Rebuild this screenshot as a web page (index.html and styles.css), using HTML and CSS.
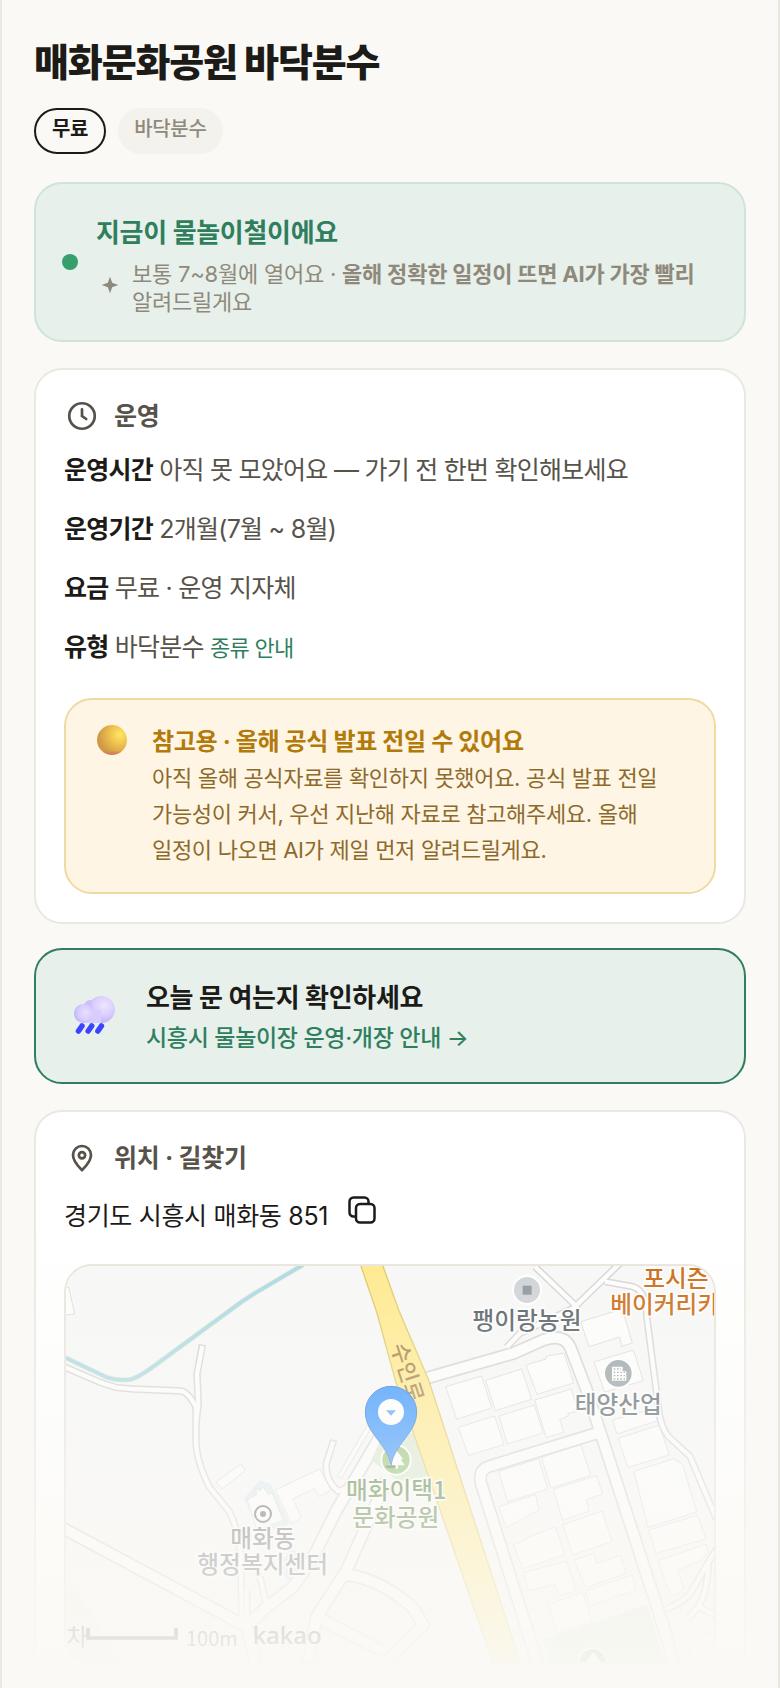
FILE: index.html
```html
<!DOCTYPE html>
<html lang="ko">
  <head>
    <meta charset="UTF-8" />
    <meta name="viewport" content="width=device-width, initial-scale=1.0" />
    <title>매화문화공원 바닥분수</title>
    <link rel="stylesheet" href="styles.css">
  </head>
  <body>
    <main class="page">
      <header class="page-header">
        <h1 class="page-title">매화문화공원 바닥분수</h1>
        <div class="badges">
          <span class="badge badge-free">무료</span>
          <span class="badge">바닥분수</span>
        </div>
      </header>

      <section class="card season-card">
        <span class="season-dot"></span>
        <div class="season-body">
          <h2 class="season-title">지금이 물놀이철이에요</h2>
          <div class="season-note">
            <svg class="spark" viewBox="0 0 24 24" aria-hidden="true"><path d="M12 2l2.600 7.400L22 12l-7.400 2.600L12 22l-2.600-7.400L2 12l7.400-2.600z" /></svg>
            <p>보통 7~8월에 열어요 · <b>올해 정확한 일정이 뜨면 AI가 가장 빨리</b> 알려드릴게요</p>
          </div>
        </div>
      </section>

      <section class="card info-card">
        <h2 class="card-head">
          <svg class="head-icon" viewBox="0 0 24 24" aria-hidden="true"><circle cx="12" cy="12" r="8.500" /><path d="M12 7.500V12l2.800 2" /></svg>
          운영
        </h2>
        <div class="info-rows">
          <p><b>운영시간</b> 아직 못 모았어요 — 가기 전 한번 확인해보세요</p>
          <p><b>운영기간</b> 2개월(7월 ~ 8월)</p>
          <p><b>요금</b> 무료 · 운영 지자체</p>
          <p><b>유형</b> 바닥분수 <a class="type-link" href="#">종류 안내</a></p>
        </div>
        <div class="caution">
          <svg class="coin" viewBox="0 0 32 32" aria-hidden="true">
            <defs>
              <radialGradient id="coinFill" cx="0.76" cy="0.32" r="0.7">
                <stop offset="0" stop-color="#ffe860" />
                <stop offset="0.5" stop-color="#eec04e" />
                <stop offset="1" stop-color="#d09a45" />
              </radialGradient>
              <linearGradient id="coinShade" x1="0" y1="0" x2="0" y2="1">
                <stop offset="0.85" stop-color="#d0706a" stop-opacity="0" />
                <stop offset="1" stop-color="#d0706a" stop-opacity="0.9" />
              </linearGradient>
            </defs>
            <circle cx="16" cy="16" r="15" fill="url(#coinFill)" />
            <circle cx="16" cy="16" r="15" fill="url(#coinShade)" />
          </svg>
          <div>
            <h3 class="caution-title">참고용 · 올해 공식 발표 전일 수 있어요</h3>
            <p class="caution-text">아직 올해 공식자료를 확인하지 못했어요. 공식 발표 전일 가능성이 커서, 우선 지난해 자료로 참고해주세요. 올해 일정이 나오면 AI가 제일 먼저 알려드릴게요.</p>
          </div>
        </div>
      </section>

      <a class="card notice-card" href="#">
        <svg class="rain" viewBox="0 3 44 44" aria-hidden="true">
          <defs>
            <radialGradient id="cloudBack" cx="0.6" cy="0.35" r="0.65">
              <stop offset="0" stop-color="#ece6ff" />
              <stop offset="0.6" stop-color="#dacdfd" />
              <stop offset="1" stop-color="#bdb2fb" />
            </radialGradient>
            <radialGradient id="cloudFront" cx="0.6" cy="0.45" r="0.6">
              <stop offset="0" stop-color="#e8defe" />
              <stop offset="0.65" stop-color="#d8cdfd" />
              <stop offset="1" stop-color="#bcb5fb" />
            </radialGradient>
          </defs>
          <circle cx="18" cy="13" r="6" fill="#cdc0fa" />
          <circle cx="29.5" cy="16.5" r="13.5" fill="url(#cloudBack)" />
          <rect x="11" y="17" width="18" height="13" fill="#d8ccfd" />
          <circle cx="11.500" cy="20.500" r="9.500" fill="url(#cloudFront)" />
          <path d="M10 33l-3.500 5M19.700 33l-3.500 5M29.400 33l-3.500 5" stroke="#3b45ff" stroke-width="5.500" stroke-linecap="round" />
        </svg>
        <span class="notice-body">
          <strong class="notice-title">오늘 문 여는지 확인하세요</strong>
          <span class="notice-sub">시흥시 물놀이장 운영·개장 안내 →</span>
        </span>
      </a>

      <section class="card place-card">
        <h2 class="card-head">
          <svg class="head-icon" viewBox="0 0 24 24" aria-hidden="true"><path d="M12 20C10 18 6 14.500 6 10a6 6 0 0 1 12 0c0 4.500-4 8-6 10z" /><circle cx="12" cy="10.200" r="2.100" /></svg>
          위치 · 길찾기
        </h2>
        <div class="address">
          <span>경기도 시흥시 매화동 851</span>
          <button class="copy-button" type="button" aria-label="주소 복사">
            <svg viewBox="0 0 28 28" aria-hidden="true"><rect x="8" y="8" width="18.500" height="18.500" rx="4" /><path d="M8 20.500H5.500a4 4 0 0 1-4-4v-11a4 4 0 0 1 4-4h11a4 4 0 0 1 4 4V8" /></svg>
          </button>
        </div>

        <div class="map">
          <svg class="map-canvas" viewBox="48 48 1944 1188" preserveAspectRatio="xMidYMin slice" role="img" aria-label="지도">
            <!-- plots, parks -->
            <g class="map-plot">
              <path d="M30 112h26l18 79-44 8z" />
              <path d="M498 696l74-54 14 20-70 55z" />
              <path d="M675 720l134-63 35 63-37 20-14-24-64 30 26 58-30 17z" />
              <path d="M862 680l90-155 12 8-90 152z" />
              <path d="M1187 410l108-32 30 96-105 34zM1307 391l108-34 30 91-109 34zM1428 345l60-18v-8l54-10 29 90-110 34zM1225 532l109-34 28 86-107 32zM1347 498l106-33 26 84-107 33zM1454 450l110-33 20 66-30 8 1 6-26 12 12 38-52 16z" />
              <path d="M1346 664l120-38 27 91-120 38zM1474 622l118-38 30 92-120 38zM1346 770l110-36 12 46-100 53zM1510 717l130-40 18 56-50 16 10 34-80 28zM1538 824l118-41 30 92-118 40zM1390 884l40-15-1-6 88-32 27 84-126 41zM1421 967l128-34 30 90-50 14-14-34-80 20zM1572 930l60-20 8 30 72-24 17 54-121 43zM1607 1024l140-50 10 46-136 46zM1495 1064l102-38 29 88-104 37z" />
              <path d="M1592 215l125-38 30 102-32 10-6-28-92 29zM1632 336l118-36 30 92-116 34zM1688 510l120-34 15 36-122 40zM1704 565l124-40 30 90-124 37zM1752 664l120-38 26 18 42 142-146 46zM1796 840l146-44 26 70-150 45zM1824 932l144-50 5 26-16 20-74 34 18 50q-10 24-40 24z" />
              <path d="M1913 1180l79-36v92h-60z" />
            </g>
            <path class="map-water-lot" d="M582 745l48-55 32 12 56 118-20 20-78-10z" />
            <path class="map-plot" d="M592 750l28-16-3-18 14 6 9-12 14 24 12-6 34 84-80 26z" />
            <path class="map-water-lot" d="M700 930l24-40 50 50-50 64-20-24z" />
            <path class="map-park" d="M1480 1170l312-106 50 172h-340z" />
            <path class="map-soil" d="M30 980q120 110 170 256H30z" />

            <!-- road outlines -->
            <g class="road-edge">
              <path d="M30 345l120 52 50 16 50 4 146 6q22 8 42 48v100q0 60 40 140l60 74q30 60 34 140l4 200" />
              <path d="M457 284l-16 88 4 90-7 60" />
              <path d="M851 570l-22 70q-4 50 36 84l30-12" />
              <path class="wide" d="M30 830l560 300 30 120" />
              <path class="wide" d="M990 560L860 780l-70 140-60 90-90 70-40 40" />
              <path class="wide" d="M1010 690l-120 270-90 140-30 160" />
              <path class="wide" d="M890 975q100 10 200 100l30 50-100 100M810 1105l190 100" />
              <path d="M590 1020v90M630 980l20 90" />
              <path class="wide" d="M1110 390l280-80 90-40q60-20 80 20l50 130 240 740 20 90" />
              <path class="wide" d="M1655 545l-340 105q-30 10-22 50l170 540" />
              <path d="M1370 292l40-42 170-80L1455 50M1575 170L1715 35M1665 95l80 14q45 10 45 90l35 270q5 60 30 90l65 60 80 190" />
              <path d="M1850 1075q60-20 80-60l40-70 34-55M1975 940q0 80-30 130l50 25M1945 1070l-30 35" />
            </g>
            <g class="road-fill">
              <path d="M30 345l120 52 50 16 50 4 146 6q22 8 42 48v100q0 60 40 140l60 74q30 60 34 140l4 200" />
              <path d="M457 288l-16 84 4 90-7 60" />
              <path d="M850 574l-21 66q-4 50 36 84l30-12" />
              <path class="wide" d="M30 830l560 300 30 120" />
              <path class="wide" d="M990 560L860 780l-70 140-60 90-90 70-40 40" />
              <path class="wide" d="M1010 690l-120 270-90 140-30 160" />
              <path class="wide" d="M890 975q100 10 200 100l30 50-100 100M810 1105l190 100" />
              <path d="M590 1020v90M630 980l20 90" />
              <path class="wide" d="M1110 390l280-80 90-40q60-20 80 20l50 130 240 740 20 90" />
              <path class="wide" d="M1655 545l-340 105q-30 10-22 50l170 540" />
              <path d="M1370 292l40-42 170-80L1455 50M1575 170L1715 35M1665 95l80 14q45 10 45 90l35 270q5 60 30 90l65 60 80 190" />
              <path d="M1850 1075q60-20 80-60l40-70 34-55M1975 940q0 80-30 130l50 25M1945 1070l-30 35" />
            </g>
            <path class="map-park" d="M964 630l38-82h86l46 130-90 16z" />

            <!-- stream and main road -->
            <path class="stream-bank" d="M40 320l130 62q36 12 74 6 24-8 60-34l270-198 40-26L760 44" />
            <path class="stream" d="M40 320l130 62q36 12 74 6 24-8 60-34l270-198 40-26L760 44" />
            <path class="main-road" d="M930 40l50 146 58 212 290 838h82L1136 390l-90-210-50-140z" />

            <!-- places -->
            <g class="place place-dark">
              <circle cx="1431" cy="120" r="42" fill="#ced1d5" />
              <rect x="1418" y="107" width="27" height="27" fill="#87949a" stroke="none" />
              <text x="1431" y="237">팽이랑농원</text>
            </g>
            <g class="place place-slate">
              <circle cx="1705" cy="370" r="43" fill="#94a1a5" />
              <path d="M1686 350h32v14h11v28h-43z" fill="#fff" stroke="none" />
              <path d="M1691 357h22M1691 367h34M1691 377h34M1691 387h34" stroke="#94a1a5" stroke-width="4" stroke-dasharray="5 5" />
              <text x="1705" y="489">태양산업</text>
            </g>
            <g class="place place-food">
              <text x="1878" y="110">포시즌</text>
              <text class="from-left" x="1681" y="189">베이커리카페</text>
            </g>
            <g class="place place-office">
              <circle cx="639" cy="792" r="25" fill="#fff" />
              <circle class="office-ring" cx="639" cy="792" r="24" />
              <circle cx="639" cy="792" r="9" fill="#555" stroke="none" />
              <text x="639" y="890">매화동</text>
              <text x="638" y="968">행정복지센터</text>
            </g>
            <g class="place place-park">
              <circle cx="1038" cy="630" r="44" fill="#8fc16d" />
              <path d="M1040 602l20 26h-8l12 18h-20v10h-8v-10h-20l12-18h-8z" fill="#fff" stroke="none" />
              <text x="1039" y="747">매화이택1</text>
              <text x="1037" y="827">문화공원</text>
            </g>
            <g class="place">
              <circle cx="1628" cy="1236" r="42" fill="#7fae66" />
              <path d="M1630 1206l22 30h-44z" fill="#fff" stroke="none" />
            </g>
            <text class="road-name" transform="translate(1022 288) rotate(72)">수인로</text>

            <!-- pin -->
            <ellipse cx="1022" cy="650" rx="16" ry="5" fill="#3a5a3a" opacity="0.6" />
            <path class="pin" d="M1023 646C1012 580 946 550 946 486a77 77 0 0 1 154 0c0 64-66 94-77 160z" />
            <circle cx="1023" cy="486" r="39" fill="#fff" />
            <path d="M1008 481h30l-15 16z" fill="#4aa3ff" />

            <!-- scale bar -->
            <text class="scale-label" x="50" y="1186" font-size="68">차</text>
            <path class="scale-bar" d="M114 1134v30h264v-30" />
            <text class="scale-label" x="408" y="1187" font-size="60">100m</text>
            <text class="map-brand" x="608" y="1182">kakao</text>
          </svg>
        </div>
      </section>

      <div class="page-fade"></div>
    </main>
  </body>
</html>
```
FILE: styles.css
```css
* {
  box-sizing: border-box;
}

body {
  margin: 0;
  background: #faf9f5;
  color: #1c1b18;
  font-family: Inter, "Noto Sans CJK KR", sans-serif;
  letter-spacing: -0.02em;
  word-break: keep-all;
}

h1,
h2,
h3,
p {
  margin: 0;
}

a {
  color: #2f7f5f;
  text-decoration: none;
}

/* preview of the detail page, cut off at the window */
.page {
  position: relative;
  height: 100vh;
  overflow: hidden;
  padding: 34px 32px 0;
  border: 2px solid #e9e8e1;
  border-width: 0 2px;
}

.page-header {
  margin-bottom: 28px;
}

.page-title {
  font-size: 38px;
  line-height: 56px;
  font-weight: 800;
  letter-spacing: -0.03em;
}

.badges {
  display: flex;
  gap: 12px;
  margin-top: 18px;
}

.badge {
  padding: 8px 16px 12px;
  border-radius: 23px;
  background: #f3f2ed;
  color: #8f897c;
  font-size: 20px;
  line-height: 26px;
  font-weight: 500;
}

.badge-free {
  padding: 6px 16px 10px;
  border: 2px solid #1c1b18;
  background: transparent;
  color: #1c1b18;
  font-weight: 700;
}

.card {
  border: 2px solid #e9e8e1;
  border-radius: 28px;
  background: #fff;
  padding: 28px;
  margin-bottom: 26px;
}

/* season status */
.season-card {
  display: flex;
  align-items: center;
  gap: 18px;
  padding: 24px 26px;
  border-color: #cfe4d8;
  background: #e7f0ea;
}

.season-dot {
  flex: none;
  width: 16px;
  height: 16px;
  border-radius: 50%;
  background: #35a06b;
}

.season-body {
  padding-top: 6px;
}

.season-title {
  color: #2f7f5f;
  font-size: 26px;
  line-height: 38px;
  font-weight: 700;
}

.season-note {
  display: flex;
  align-items: center;
  gap: 12px;
  margin-top: 8px;
  padding-left: 4px;
  color: #8f897c;
  font-size: 22px;
  line-height: 28px;
  letter-spacing: -0.01em;
}

.spark {
  flex: none;
  width: 20px;
  height: 20px;
  margin-bottom: 6px;
  fill: #8f897c;
}

/* opening info */
.info-card {
  margin-bottom: 24px;
}

.card-head {
  display: flex;
  align-items: center;
  gap: 14px;
  color: #57534a;
  font-size: 25px;
  line-height: 36px;
  font-weight: 700;
}

.head-icon {
  width: 36px;
  height: 36px;
  fill: none;
  stroke: #57534a;
  stroke-width: 1.8;
  stroke-linecap: round;
}

.info-rows {
  display: grid;
  gap: 19px;
  margin-top: 16px;
  color: #57534a;
  font-size: 25px;
  line-height: 40px;
  letter-spacing: -0.03em;
}

.info-rows b {
  color: #1c1b18;
}

.type-link {
  font-size: 22px;
}

.caution {
  display: flex;
  gap: 24px;
  margin-top: 30px;
  padding: 24px 30px;
  border: 2px solid #f0daa4;
  border-radius: 28px;
  background: #fff5e4;
}

.coin {
  flex: none;
  width: 32px;
  height: 32px;
}

.caution-title {
  color: #b27a0a;
  font-size: 24px;
  line-height: 36px;
  font-weight: 700;
}

.caution-text {
  color: #8c6a2c;
  font-size: 22px;
  line-height: 36px;
}

/* today notice */
.notice-card {
  display: flex;
  align-items: center;
  gap: 30px;
  padding: 28px 36px 24px;
  border-color: #2f7f5f;
  background: #e8f0eb;
}

.rain {
  flex: none;
  width: 44px;
  height: 44px;
}

.notice-body {
  display: grid;
}

.notice-title {
  color: #1c1b18;
  font-size: 26px;
  line-height: 40px;
}

.notice-sub {
  font-size: 23px;
  line-height: 40px;
  font-weight: 500;
}

/* location */
.place-card {
  padding-bottom: 60px;
}

.address {
  display: flex;
  align-items: flex-start;
  gap: 20px;
  margin-top: 20px;
  font-size: 25px;
  line-height: 40px;
}

.copy-button {
  width: 28px;
  height: 28px;
  padding: 0;
  border: 0;
  background: none;
}

.copy-button svg {
  display: block;
  fill: none;
  stroke: #1c1b18;
  stroke-width: 2.5;
}

.map {
  margin-top: 28px;
  border: 2px solid #e9e4dc;
  border-radius: 28px;
  overflow: hidden;
}

.map-canvas {
  display: block;
  width: 100%;
  height: 396px;
  background: #f7f7f7;
  font-family: "Noto Sans CJK KR", sans-serif;
  letter-spacing: 0;
}

.map-plot {
  fill: #fdfdfd;
  stroke: #dcdcdc;
  stroke-width: 3;
}

.map-water-lot {
  fill: #dce8f0;
}

.map-park {
  fill: #d8e8d0;
}

.map-soil {
  fill: #f3efe6;
}

.road-edge,
.road-fill {
  fill: none;
  stroke-linejoin: round;
}

.road-edge {
  stroke: #d4d4d4;
  stroke-width: 22;
}

.road-fill {
  stroke: #fdfdfd;
  stroke-width: 13;
}

.road-edge .wide {
  stroke-width: 40;
}

.road-fill .wide {
  stroke-width: 30;
}

.stream-bank,
.stream {
  fill: none;
  stroke: #cfe0c4;
  stroke-width: 14;
}

.stream {
  stroke: #a4d8ea;
  stroke-width: 9;
}

.main-road {
  fill: #ffe98a;
  stroke: #dcc764;
  stroke-width: 4;
}

.place {
  stroke: #fff;
  stroke-width: 6;
}

.place text {
  paint-order: stroke;
  stroke-width: 10;
  stroke-linejoin: round;
  font-size: 71px;
  font-weight: 500;
  text-anchor: middle;
}

.place .from-left {
  text-anchor: start;
}

.place-dark {
  fill: #4d585e;
}

.place-slate {
  fill: #56636a;
}

.place-food {
  fill: #c8650a;
}

.place-office {
  fill: #5c6268;
}

.place-office .office-ring {
  fill: none;
  stroke: #555;
}

.place-park {
  fill: #507c38;
}

.road-name {
  fill: #a07c40;
  font-size: 66px;
  font-weight: 500;
}

.pin {
  fill: #2f90ff;
  stroke: #2a72d0;
  stroke-width: 3;
}

.scale-bar {
  fill: none;
  stroke: #333;
  stroke-width: 11;
}

.scale-label {
  fill: #444;
}

.map-brand {
  fill: #333;
  font-family: "Noto Sans", sans-serif;
  font-size: 72px;
  font-weight: 500;
}

.page-fade {
  position: absolute;
  left: 0;
  right: 0;
  bottom: 0;
  height: 460px;
  background: linear-gradient(rgba(250, 249, 245, 0), #faf9f5);
  pointer-events: none;
}
```
